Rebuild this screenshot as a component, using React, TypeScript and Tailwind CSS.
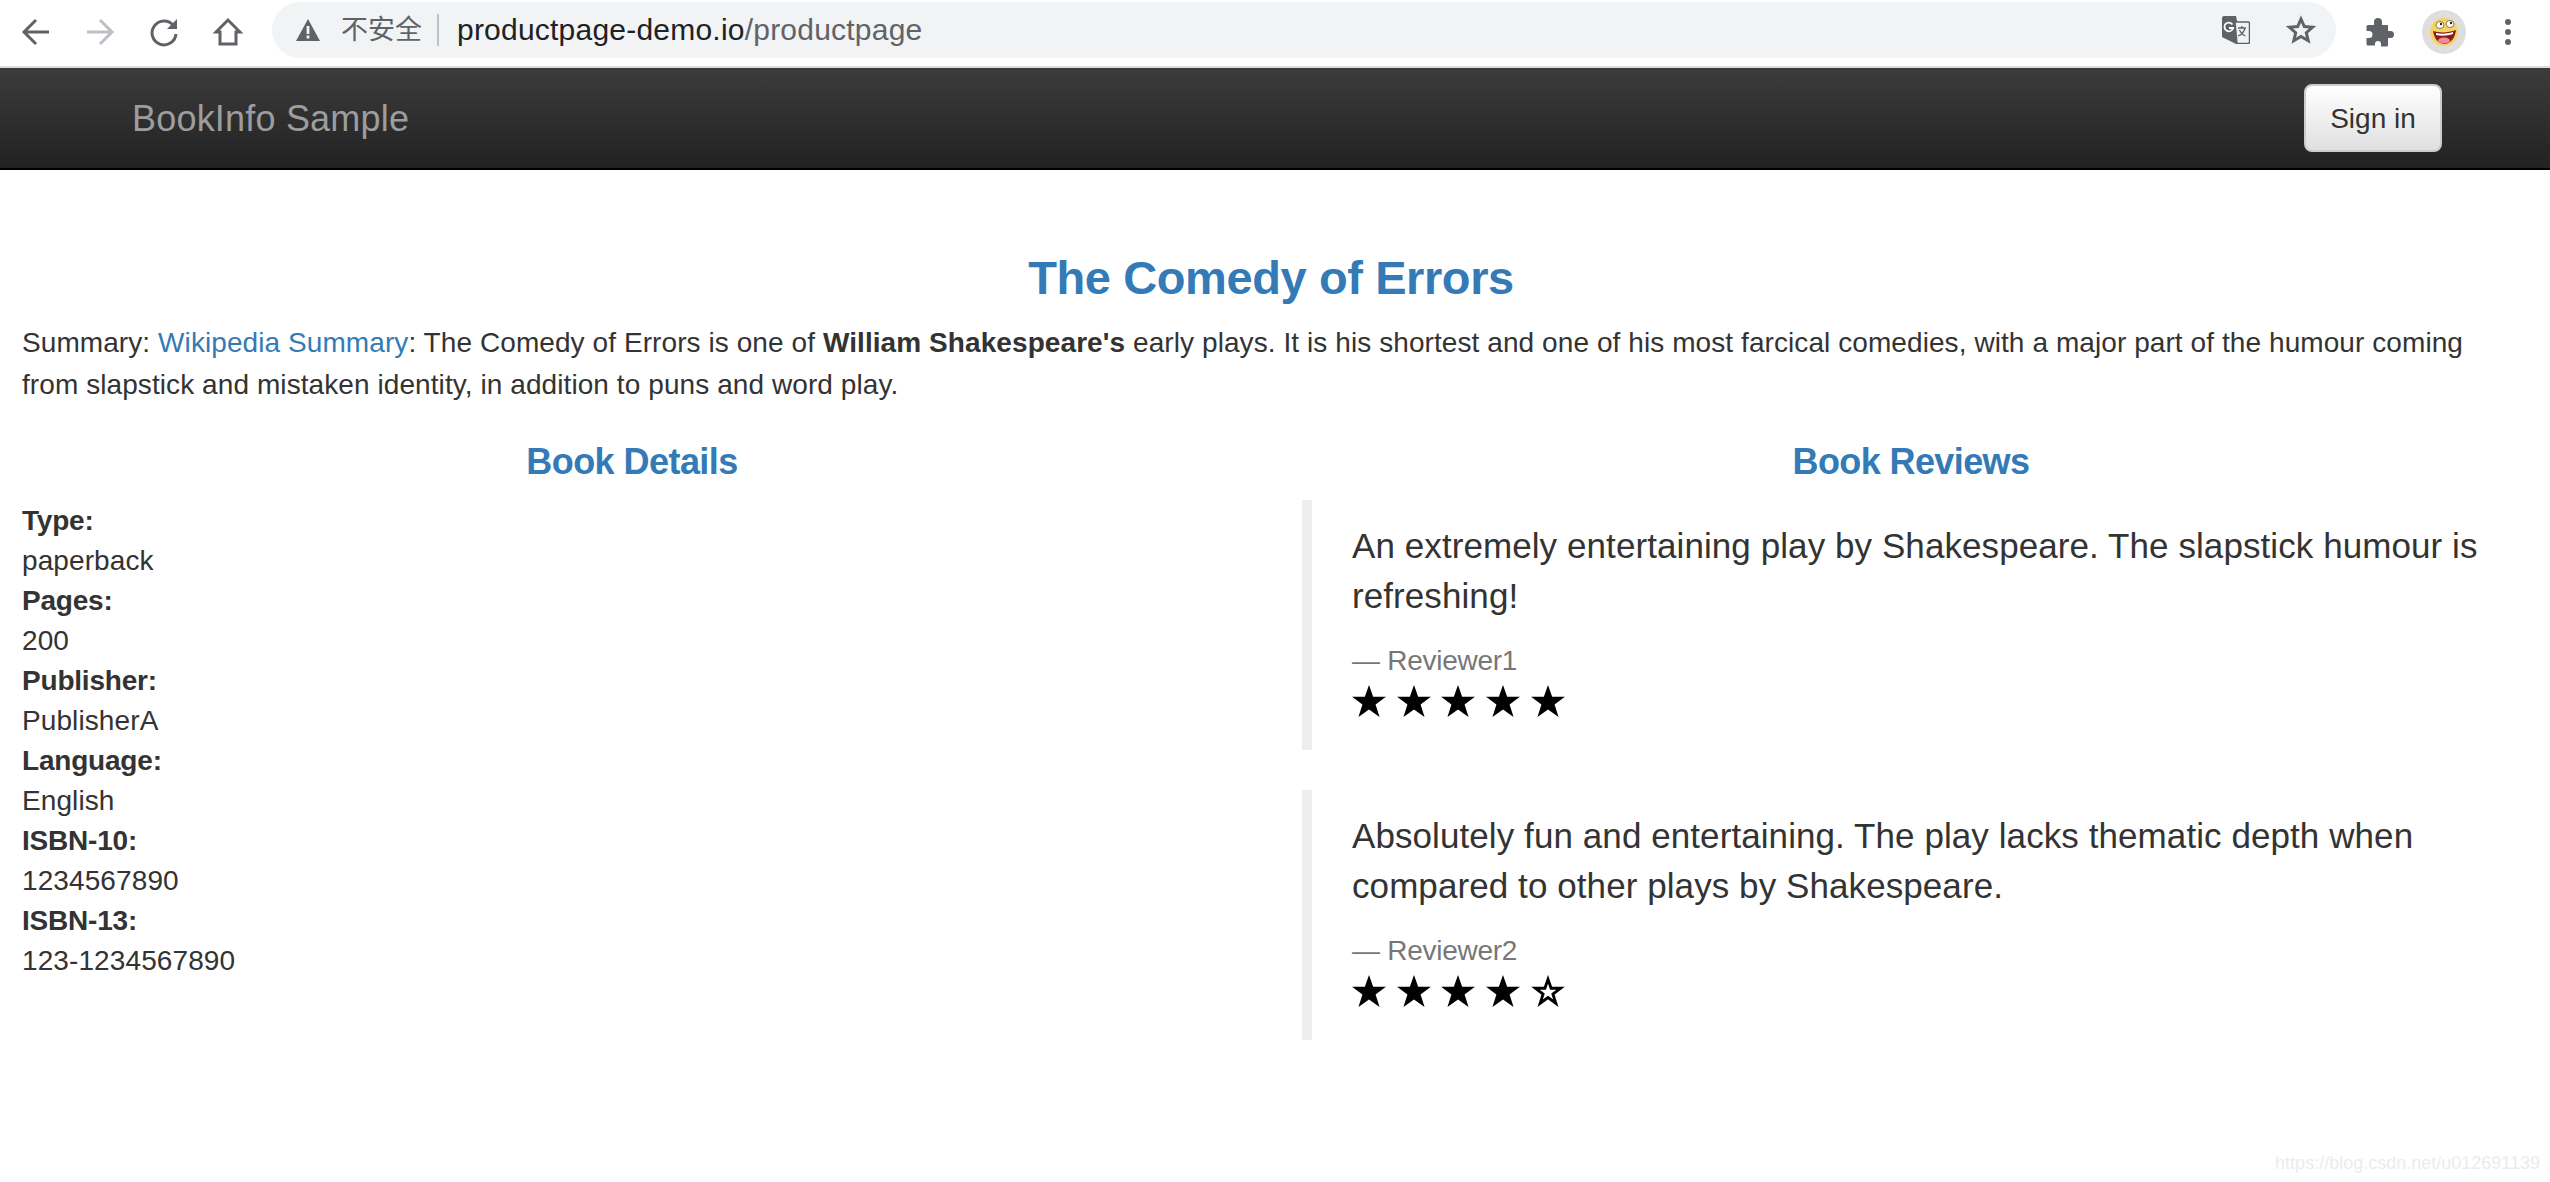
import React from "react";

const Star = ({ filled = true }: { filled?: boolean }) => (
  <svg width="34" height="32" viewBox="0 0 36 34" className="block shrink-0">
    {filled ? (
      <polygon points="18,0 22.4,12.6 36,12.6 25,20.8 29.2,34 18,25.9 6.8,34 11,20.8 0,12.6 13.6,12.6" fill="#000" />
    ) : (
      <polygon points="18,4.5 21.3,14.1 31.4,14.1 23.2,20.2 26.3,30 18,24 9.7,30 12.8,20.2 4.6,14.1 14.7,14.1" fill="#fff" stroke="#000" strokeWidth="3" />
    )}
  </svg>
);

const Stars = ({ n }: { n: number }) => (
  <div className="flex h-[49px] gap-[10.7px] pt-1">
    {[0, 1, 2, 3, 4].map((i) => (
      <Star key={i} filled={i < n} />
    ))}
  </div>
);

const Review = ({ text, name, n }: { text: string; name: string; n: number }) => (
  <blockquote className="border-l-[10px] border-[#eeeeee] pb-5 pl-10 pr-0 pt-[21px] text-[35px] leading-[50px] tracking-[0.08px] text-[#333333]">
    <p>{text}</p>
    <div className="mt-5 text-[28px] leading-[40px] tracking-[-0.27px] text-[#777777]">— {name}</div>
    <Stars n={n} />
  </blockquote>
);

const details: [string, string][] = [
  ["Type:", "paperback"],
  ["Pages:", "200"],
  ["Publisher:", "PublisherA"],
  ["Language:", "English"],
  ["ISBN-10:", "1234567890"],
  ["ISBN-13:", "123-1234567890"],
];

const NavBtn = ({ children }: { children: React.ReactNode }) => (
  <div className="flex h-full w-16 items-center justify-center">{children}</div>
);

export default function App() {
  return (
    <div className="relative h-[1182px] overflow-hidden bg-white font-['Liberation_Sans','Noto_Sans_CJK_SC',sans-serif] text-[28px] text-[#333333]">
      {/* browser toolbar */}
      <div className="flex h-[68px] items-start border-b-2 border-[#dadce0] bg-white pl-1 pt-[2px]">
        <div className="flex h-[60px]">
          <NavBtn>
            <svg width="30" height="30" viewBox="0 0 30 30" fill="none" stroke="#5f6368" strokeWidth="3">
              <path d="M28 15H4M15 3 3 15l12 12" />
            </svg>
          </NavBtn>
          <NavBtn>
            <svg width="30" height="30" viewBox="0 0 30 30" fill="none" stroke="#bdc1c6" strokeWidth="3">
              <path d="M2 15h24M15 3l12 12-12 12" />
            </svg>
          </NavBtn>
          <NavBtn>
            <svg width="30" height="30" viewBox="0 0 30 30" fill="none">
              <path d="M24.5 8.5A12 12 0 1 0 27 17" stroke="#5f6368" strokeWidth="3" />
              <path d="M28 2v10H18z" fill="#5f6368" />
            </svg>
          </NavBtn>
          <NavBtn>
            <svg width="30" height="30" viewBox="0 0 30 30" fill="none" stroke="#5f6368" strokeWidth="3">
              <path d="M15 3 3 15h4v12h16V15h4z" />
            </svg>
          </NavBtn>
        </div>
        <div className="ml-3 flex h-14 w-[2064px] items-center rounded-[28px] bg-[#f1f3f4] pl-[23px]">
          <svg width="26" height="24" viewBox="0 0 26 24" className="shrink-0">
            <path d="M13 1 25 23H1z" fill="#5f6368" />
            <path d="M11.6 8h2.8v8h-2.8zM11.6 17.6h2.8v2.8h-2.8z" fill="#f1f3f4" />
          </svg>
          <span className="ml-[20px] text-[27px] leading-none text-[#5f6368]">不安全</span>
          <span className="ml-[15px] h-[32px] w-[2px] bg-[#bfc1c4]" />
          <span className="ml-[18px] whitespace-nowrap text-[30px] leading-none tracking-[0.22px] text-[#202124]">
            productpage-demo.io<span className="text-[#5f6368]">/productpage</span>
          </span>
          <div className="ml-auto flex items-center gap-[36px] pr-[20px]">
            <svg width="28" height="28" viewBox="0 0 28 28">
              <path d="M2 0h12l6 28h-6L2 22a2 2 0 0 1-2-2V2a2 2 0 0 1 2-2z" fill="#5f6368" />
              <path d="M13 6h13a1.500 1.500 0 0 1 1.500 1.500v18.500a1.500 1.500 0 0 1-1.500 1.500H15l-2-21z" fill="#f1f3f4" stroke="#5f6368" strokeWidth="1.500" />
              <path d="M10.500 8.500a4.400 4.400 0 1 0 .6 3.500H7" fill="none" stroke="#fff" strokeWidth="1.800" />
              <path d="M16 12h8M20 10v2M23 12c-1 4-4 7-7 8M17.500 14c1 2 3 5 6 6" fill="none" stroke="#5f6368" strokeWidth="1.300" />
            </svg>
            <svg width="30" height="30" viewBox="0 0 30 30" fill="none" stroke="#5f6368" strokeWidth="3">
              <path d="M15 4l3.300 7.600 8.200.7-6.200 5.400 1.900 8-7.200-4.300-7.200 4.300 1.900-8-6.200-5.400 8.200-.7z" />
            </svg>
          </div>
        </div>
        <div className="ml-3 flex h-[60px] items-center">
          <div className="flex w-16 justify-center">
            <svg width="30" height="30" viewBox="0 0 30 30" fill="#5f6368">
              <path d="M3 8h6V5a4 4 0 0 1 8 0v3h6v6h2.500a3.500 3.500 0 0 1 0 7H23v7a1.500 1.500 0 0 1-1.500 1.500H16v-2.500a3 3 0 0 0-6 0V28.500H3a1.500 1.500 0 0 1-1.500-1.500V21H4a3.500 3.500 0 0 0 0-7H1.500V9.500A1.500 1.500 0 0 1 3 8z" />
            </svg>
          </div>
          <div className="flex w-16 justify-center">
            <div className="flex h-11 w-11 items-center justify-center rounded-full bg-[#dedede]">
              <svg width="30" height="30" viewBox="0 0 30 30">
                <circle cx="15" cy="15" r="14" fill="#f6d365" />
                <ellipse cx="11" cy="8" rx="4" ry="3.500" fill="#fff" stroke="#7a5b1e" strokeWidth=".8" />
                <ellipse cx="21" cy="7" rx="4" ry="3.500" fill="#fff" stroke="#7a5b1e" strokeWidth=".8" />
                <circle cx="12" cy="7" r="1.200" fill="#222" />
                <circle cx="22" cy="6" r="1.200" fill="#222" />
                <path d="M4 14c6 2 16 2 23-1-1 8-5 13-11 14C9 27 5 21 4 14z" fill="#8c1d1a" />
                <path d="M7 16c5 1 11 1 17-1v2c-6 2-12 2-17 1z" fill="#fff" />
                <ellipse cx="15" cy="23.500" rx="6" ry="3" fill="#f08a9a" />
              </svg>
            </div>
          </div>
          <div className="flex w-16 flex-col items-center gap-1">
            <span className="h-[6px] w-[6px] rounded-full bg-[#5f6368]" />
            <span className="h-[6px] w-[6px] rounded-full bg-[#5f6368]" />
            <span className="h-[6px] w-[6px] rounded-full bg-[#5f6368]" />
          </div>
        </div>
      </div>

      {/* navbar */}
      <nav className="flex h-[102px] items-center justify-between border-b-2 border-black bg-gradient-to-b from-[#3c3c3c] to-[#222222] pl-[132px] pr-[108px]">
        <span className="pt-[1px] text-[36px] leading-none tracking-[0.2px] text-[#9d9d9d]">BookInfo Sample</span>
        <button className="h-[68px] w-[138px] rounded-lg border-2 border-[#cccccc] bg-gradient-to-b from-white to-[#e0e0e0] pt-[1px] text-[28px] text-[#333333]">
          Sign in
        </button>
      </nav>

      {/* content */}
      <main className="pl-[22px] pr-[30px] pt-[81px]">
        <h3 className="text-center text-[47px] font-bold leading-[53px] tracking-[-0.4px] text-[#337ab7]">The Comedy of Errors</h3>
        <p className="mt-[18px] text-[28px] leading-[42px] tracking-[0.08px]">
          Summary: <a className="text-[#337ab7]">Wikipedia Summary</a>: The Comedy of Errors is one of{" "}
          <b>William Shakespeare's</b> early plays. It is his shortest and one of his most farcical comedies, with a
          major part of the humour coming from slapstick and mistaken identity, in addition to puns and word play.
        </p>
        <div className="mt-9 grid grid-cols-[1250px_1248px] gap-0">
          <section className="pr-[30px]">
            <h4 className="text-center text-[36px] font-bold leading-[40px] tracking-[-0.55px] text-[#337ab7]">Book Details</h4>
            <dl className="mt-[19px] leading-[40px]">
              {details.map(([k, v]) => (
                <React.Fragment key={k}>
                  <dt className="font-bold tracking-[-0.2px]">{k}</dt>
                  <dd className="tracking-[0.1px]">{v}</dd>
                </React.Fragment>
              ))}
            </dl>
          </section>
          <section className="pl-[30px]">
            <h4 className="text-center text-[36px] font-bold leading-[40px] tracking-[-0.6px] text-[#337ab7]">Book Reviews</h4>
            <div className="mt-[18px] flex flex-col gap-10">
              <Review
                text="An extremely entertaining play by Shakespeare. The slapstick humour is refreshing!"
                name="Reviewer1"
                n={5}
              />
              <Review
                text="Absolutely fun and entertaining. The play lacks thematic depth when compared to other plays by Shakespeare."
                name="Reviewer2"
                n={4}
              />
            </div>
          </section>
        </div>
      </main>

      {/* watermark */}
      <div className="absolute bottom-[10px] right-[10px] text-[18px] leading-none text-[#ececec]">
        https://blog.csdn.net/u012691139
      </div>
    </div>
  );
}
